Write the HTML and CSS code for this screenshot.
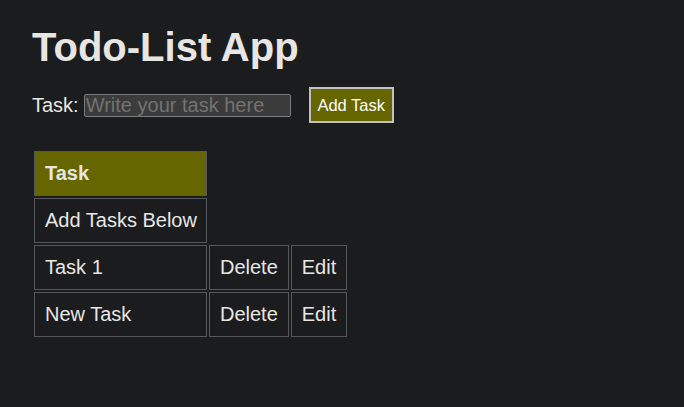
FILE: index.html
```html
<!DOCTYPE html>
<html>
<head>
<meta charset="utf-8">
<link rel="stylesheet" href="styles.css">
</head>
<body>
<div class="app">
  <h1 class="title">Todo-List App</h1>
  <div class="form">
    <label class="label" for="task">Task:</label>
    <input class="input" id="task" type="text" placeholder="Write your task here">
    <button class="add">Add Task</button>
  </div>
  <table class="list">
    <tr><th class="head name">Task</th></tr>
    <tr><td class="name">Add Tasks Below</td></tr>
    <tr><td class="name">Task 1</td><td>Delete</td><td>Edit</td></tr>
    <tr><td class="name">New Task</td><td>Delete</td><td>Edit</td></tr>
  </table>
</div>
</body>
</html>
```
FILE: styles.css
```css
html, body {
  background: #1b1c1e;
}
body {
  margin: 8px;
  font-family: "Liberation Sans", Arial, sans-serif;
  font-size: 20px;
  color: #e8e6e3;
}
.app {
  padding: 0 24px;
}
.title {
  font-size: 40px;
  font-weight: bold;
  margin: 16px 0 0;
  line-height: 46px;
}
.form {
  display: flex;
  align-items: center;
  margin-top: 17px;
}
.label {
  font-size: 20px;
  margin-right: 5px;
}
.input {
  width: 207px;
  height: 23px;
  box-sizing: border-box;
  background: #3b3b3b;
  border: 1px solid #7a7a7a;
  border-radius: 2px;
  color: #e8e6e3;
  font-family: "Liberation Sans", Arial, sans-serif;
  font-size: 20px;
  padding: 0 1px;
}
.input::placeholder {
  color: #727272;
}
.add {
  margin-left: 18px;
  width: 85px;
  height: 36px;
  background: #666600;
  border: 2px solid #c2c2c2;
  color: #ffffff;
  font-family: "Liberation Sans", Arial, sans-serif;
  font-size: 16.5px;
  padding: 0;
}
.list {
  margin-top: 26px;
  border-spacing: 2px;
  font-size: 20px;
}
.list th, .list td {
  border: 1px solid #54585c;
  padding: 10px 10px;
  text-align: left;
  line-height: 23px;
}
.list .name {
  padding-right: 9px;
}
.list .head {
  background: #666600;
  font-weight: bold;
  font-size: 20px;
}
```
